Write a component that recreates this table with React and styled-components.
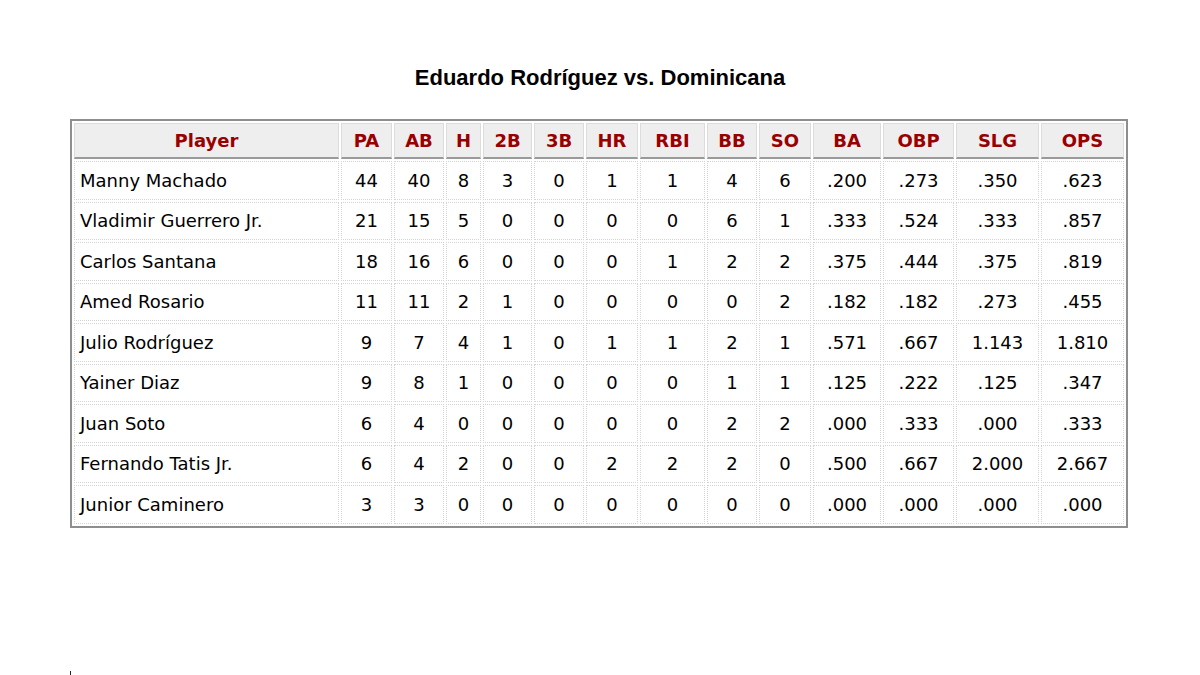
import React from 'react';
import styled, { createGlobalStyle } from 'styled-components';

const GlobalStyle = createGlobalStyle`
  html, body {
    margin: 0;
    padding: 0;
    background: #fff;
  }
  body {
    font-family: "DejaVu Sans", Verdana, sans-serif;
    color: #000;
  }
`;

const Page = styled.main`
  position: relative;
  width: 1200px;
  height: 675px;
  box-sizing: border-box;
  padding: 63px 70px 0 70px;
  overflow: hidden;
`;

const Title = styled.h1`
  margin: 0;
  height: 30px;
  line-height: 30px;
  text-align: center;
  font-family: "Liberation Sans", Arial, sans-serif;
  font-weight: 700;
  font-size: 22px;
  color: #000;
`;

const StatsTable = styled.table`
  margin-top: 26px;
  width: 1058px;
  table-layout: fixed;
  border-collapse: separate;
  border-spacing: 2px;
  border: 2px solid #8e8e8e;
  font-size: 18px;
`;

const HeadCell = styled.th`
  width: ${({ w }) => w}px;
  height: 36px;
  box-sizing: border-box;
  padding: 0;
  background: #eeeeee;
  border: 1px solid #dcdcdc;
  border-bottom: 2px solid #9a9a9a;
  color: #990000;
  font-weight: 700;
  text-align: center;
  vertical-align: middle;
`;

const Cell = styled.td`
  height: 38.5px;
  box-sizing: border-box;
  padding: 0 ${({ left }) => (left ? '5px' : '0')};
  border: 1px dotted #d4d4d4;
  text-align: ${({ left }) => (left ? 'left' : 'center')};
  vertical-align: middle;
  white-space: nowrap;
`;

const Tick = styled.span`
  position: absolute;
  left: 70px;
  bottom: 0;
  width: 1px;
  height: 4px;
  background: #222;
`;

const columns = [
  ['Player', 265],
  ['PA', 51],
  ['AB', 50],
  ['H', 35],
  ['2B', 49],
  ['3B', 50],
  ['HR', 52],
  ['RBI', 65],
  ['BB', 50],
  ['SO', 52],
  ['BA', 68],
  ['OBP', 71],
  ['SLG', 83],
  ['OPS', 83],
];

const rows = [
  ['Manny Machado', 44, 40, 8, 3, 0, 1, 1, 4, 6, '.200', '.273', '.350', '.623'],
  ['Vladimir Guerrero Jr.', 21, 15, 5, 0, 0, 0, 0, 6, 1, '.333', '.524', '.333', '.857'],
  ['Carlos Santana', 18, 16, 6, 0, 0, 0, 1, 2, 2, '.375', '.444', '.375', '.819'],
  ['Amed Rosario', 11, 11, 2, 1, 0, 0, 0, 0, 2, '.182', '.182', '.273', '.455'],
  ['Julio Rodríguez', 9, 7, 4, 1, 0, 1, 1, 2, 1, '.571', '.667', '1.143', '1.810'],
  ['Yainer Diaz', 9, 8, 1, 0, 0, 0, 0, 1, 1, '.125', '.222', '.125', '.347'],
  ['Juan Soto', 6, 4, 0, 0, 0, 0, 0, 2, 2, '.000', '.333', '.000', '.333'],
  ['Fernando Tatis Jr.', 6, 4, 2, 0, 0, 2, 2, 2, 0, '.500', '.667', '2.000', '2.667'],
  ['Junior Caminero', 3, 3, 0, 0, 0, 0, 0, 0, 0, '.000', '.000', '.000', '.000'],
];

export default function App() {
  return (
    <Page>
      <GlobalStyle />
      <Title>Eduardo Rodríguez vs. Dominicana</Title>
      <StatsTable>
        <thead>
          <tr>
            {columns.map(([label, w]) => (
              <HeadCell key={label} w={w}>{label}</HeadCell>
            ))}
          </tr>
        </thead>
        <tbody>
          {rows.map((row) => (
            <tr key={row[0]}>
              {row.map((value, i) => (
                <Cell key={i} left={i === 0}>{value}</Cell>
              ))}
            </tr>
          ))}
        </tbody>
      </StatsTable>
      <Tick />
    </Page>
  );
}
